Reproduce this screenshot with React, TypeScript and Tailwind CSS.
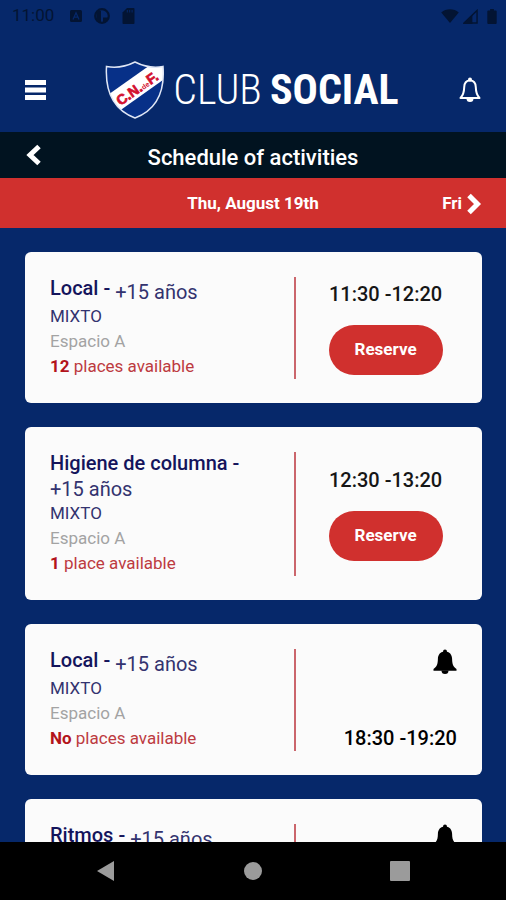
import { useState } from "react";

type Activity = {
  id: number;
  name: string;
  ages: string;
  group: string;
  room: string;
  places: number;
  time: string;
};

const activities: Activity[] = [
  { id: 1, name: "Local -", ages: "+15 años", group: "MIXTO", room: "Espacio A", places: 12, time: "11:30 -12:20" },
  { id: 2, name: "Higiene de columna -", ages: "+15 años", group: "MIXTO", room: "Espacio A", places: 1, time: "12:30 -13:20" },
  { id: 3, name: "Local -", ages: "+15 años", group: "MIXTO", room: "Espacio A", places: 0, time: "18:30 -19:20" },
  { id: 4, name: "Ritmos -", ages: "+15 años", group: "MIXTO", room: "Espacio A", places: 0, time: "19:30 -20:20" },
];

function StatusBar() {
  return (
    <div className="flex h-8 shrink-0 items-center justify-between pl-3 pr-2 text-[#031433]">
      <div className="flex items-center gap-4">
        <span className="text-[17px]">11:00</span>
        <svg className="h-3 w-3" viewBox="0 0 12 12" aria-hidden="true">
          <rect width="12" height="12" rx="1.5" fill="currentColor" />
          <path d="M3 9.5 6 2.8l3 6.7M4.2 7.2h3.6" fill="none" stroke="#06286a" strokeWidth="1.3" />
        </svg>
        <svg className="-ml-1 h-4 w-4" viewBox="0 0 16 16" aria-hidden="true">
          <circle cx="8" cy="8" r="6.8" fill="none" stroke="currentColor" strokeWidth="2.2" />
          <path d="M2.500 3H7v11.500L2.500 13z" fill="currentColor" />
          <path d="M9 9.500h5.500l-3.500 5H9z" fill="currentColor" />
        </svg>
        <svg className="-ml-1 h-4 w-[13px]" viewBox="0 0 12 16" aria-hidden="true">
          <path d="M4.500 0H11a1 1 0 0 1 1 1v14a1 1 0 0 1-1 1H1a1 1 0 0 1-1-1V4.500z" fill="currentColor" />
          <path d="M4.800 2v2.500M7.200 2v2.500M9.600 2v2.500" stroke="#06286a" strokeWidth="1" />
        </svg>
      </div>
      <div className="flex items-center gap-1">
        <svg className="h-[14px] w-[18px]" viewBox="0 0 20 16" aria-hidden="true">
          <path d="M10 16 0 4C5.500-.8 14.500-.8 20 4z" fill="currentColor" />
        </svg>
        <svg className="h-[15px] w-[15px]" viewBox="0 0 16 16" aria-hidden="true">
          <path d="M15 1.500V15H1z" fill="none" stroke="currentColor" strokeWidth="1.500" />
          <path d="M0 16 10 6v10z" fill="currentColor" />
        </svg>
        <svg className="ml-1 h-[15px] w-3" viewBox="0 0 12 16" aria-hidden="true">
          <path d="M4 0h4v1.500h2a1 1 0 0 1 1 1V15a1 1 0 0 1-1 1H2a1 1 0 0 1-1-1V2.500a1 1 0 0 1 1-1h2z" fill="currentColor" />
        </svg>
      </div>
    </div>
  );
}

function Shield() {
  return (
    <svg className="h-15 w-15" viewBox="0 0 60 60" role="img" aria-label="C.N. de F.">
      <defs>
        <clipPath id="shield">
          <path d="M1.500 6.500C12 8.500 21 6.500 30 2c9 4.500 18 6.500 28 4.500C60 32 51 50 30 58 9 50 0 32 1.500 6.500z" />
        </clipPath>
      </defs>
      <g clipPath="url(#shield)">
        <rect width="60" height="60" fill="#073088" />
        <path d="M0 37 48 3h14v14L15 50.500z" fill="#fff" />
      </g>
      <path
        d="M1.500 6.500C12 8.500 21 6.500 30 2c9 4.500 18 6.500 28 4.500C60 32 51 50 30 58 9 50 0 32 1.500 6.500z"
        fill="none"
        stroke="#dfe6f5"
        strokeWidth="1.500"
      />
      <g
        transform="translate(15.500 46) rotate(-35)"
        fill="#d3102f"
        stroke="#d3102f"
        strokeWidth="0.700"
        fontFamily="Liberation Sans, sans-serif"
        fontWeight="700"
      >
        <text x="0" y="0" fontSize="14">C.N.</text>
        <text x="28" y="0" fontSize="7" strokeWidth="0">de</text>
        <text x="36.500" y="0" fontSize="14">F.</text>
      </g>
    </svg>
  );
}

function Bell({ outline = false }: { outline?: boolean }) {
  return (
    <svg className="h-[26px] w-6" viewBox="0 0 24 26" aria-hidden="true">
      {outline ? (
        <path
          d="M12 3.500c4 0 5.700 3 5.800 6.800.1 4.700.9 7.900 3.700 10.700h-19c2.800-2.800 3.600-6 3.700-10.700.1-3.800 1.800-6.800 5.800-6.800z"
          fill="none"
          stroke="currentColor"
          strokeWidth="2"
          strokeLinejoin="round"
        />
      ) : (
        <path
          d="M12 2.500c4.600 0 7 3.200 7.100 7.300.1 4.800.7 7.700 4.400 10.300v1.700H.5v-1.700c3.700-2.600 4.300-5.500 4.400-10.300.1-4.100 2.500-7.300 7.100-7.300z"
          fill="currentColor"
        />
      )}
      <circle cx="12" cy="2.500" r="2" fill="currentColor" />
      <path d="M8.500 21.500h7a3.500 3.500 0 0 1-7 0z" fill="currentColor" />
    </svg>
  );
}

function Chevron({ right = false }: { right?: boolean }) {
  return (
    <svg className="h-[22px] w-4" viewBox="0 0 16 22" aria-hidden="true">
      <path
        d={right ? "M3 2.500 11.500 11 3 19.500" : "M14 2.500 5 11 14 19.500"}
        fill="none"
        stroke="currentColor"
        strokeWidth="5"
      />
    </svg>
  );
}

function Header() {
  return (
    <header className="flex h-[100px] shrink-0 items-end justify-between px-6 pb-3">
      <button aria-label="Menu" className="flex h-15 items-center">
        <svg className="h-5 w-[22px]" viewBox="0 0 22 20" aria-hidden="true">
          <path d="M1 2.500h21M1 10h21M1 17.500h21" stroke="currentColor" strokeWidth="5" />
        </svg>
      </button>
      <h1 className="flex items-center gap-2 whitespace-nowrap font-['Roboto_Condensed','Liberation_Sans_Narrow',sans-serif] text-[42px] leading-[60px]">
        <Shield />
        <span className="font-light">CLUB</span>
        <span className="font-bold">SOCIAL</span>
      </h1>
      <button aria-label="Notifications" className="flex h-15 items-center">
        <Bell outline />
      </button>
    </header>
  );
}

function ActivityCard({ activity }: { activity: Activity }) {
  const { name, ages, group, room, places, time } = activity;
  const full = places === 0;

  return (
    <li className="flex rounded-md bg-[#fbfbfb] px-[25px] pb-6 pt-[25px]">
      <div className="w-3/5 text-[17px] leading-[25px]">
        <div className="flex flex-wrap gap-x-[5px] pb-px text-xl leading-[22px] text-[#14145c]">
          <h2 className="font-medium">{name}</h2>
          <span className="pt-1 text-[#33336f]">{ages}</span>
        </div>
        <p className="text-[#33336f]">{group}</p>
        <p className="text-[#a3a3a3]">{room}</p>
        <p className="text-[#bd3a40]">
          <b className="text-[#b3141b]">{full ? "No" : places}</b> {places === 1 ? "place" : "places"} available
        </p>
      </div>
      {full ? (
        <div className="flex w-2/5 flex-col items-end justify-between border-l-2 border-[#cb666c] text-black">
          <button aria-label="Notify me">
            <Bell />
          </button>
          <time className="text-xl font-medium leading-[26px]">{time}</time>
        </div>
      ) : (
        <div className="flex w-2/5 flex-col items-center justify-center gap-[18px] border-l-2 border-[#cb666c] pl-[18px] text-[#161616]">
          <time className="text-xl font-medium leading-[26px]">{time}</time>
          <button className="h-[50px] w-[114px] rounded-full bg-[#d0302e] text-[17px] font-bold text-white">
            Reserve
          </button>
        </div>
      )}
    </li>
  );
}

export default function App() {
  const [day, setDay] = useState("Thu, August 19th");

  return (
    <div className="flex h-screen flex-col overflow-hidden bg-[#06286a] font-[Roboto,sans-serif] text-white">
      <StatusBar />
      <Header />
      <div className="grid h-[46px] shrink-0 grid-cols-[1fr_auto_1fr] items-center bg-[#011320] px-[25px]">
        <button aria-label="Back" className="justify-self-start">
          <Chevron />
        </button>
        <h2 className="pt-1 text-[22px] font-medium">Schedule of activities</h2>
      </div>
      <div className="grid h-[50px] shrink-0 grid-cols-[1fr_auto_1fr] items-center bg-[#d0302e] px-6 pt-0.5 text-[17px] font-bold">
        <span className="col-start-2">{day}</span>
        <button className="flex items-center gap-1 justify-self-end" onClick={() => setDay("Fri, August 20th")}>
          Fri <Chevron right />
        </button>
      </div>
      <main className="min-h-0 flex-1 overflow-y-auto pl-[25px] pr-6 pt-6 [scrollbar-width:none]">
        <ul className="flex flex-col gap-6 pb-6">
          {activities.map((activity) => (
            <ActivityCard key={activity.id} activity={activity} />
          ))}
        </ul>
      </main>
      <nav className="flex h-[58px] shrink-0 items-center justify-around bg-black px-8 text-[#9b9b9b]">
        <button aria-label="System back">
          <svg className="h-5 w-5" viewBox="0 0 20 20" aria-hidden="true">
            <path d="M18 0v20L1 10z" fill="currentColor" />
          </svg>
        </button>
        <button aria-label="Home">
          <svg className="h-5 w-5" viewBox="0 0 20 20" aria-hidden="true">
            <circle cx="10" cy="10" r="9" fill="currentColor" />
          </svg>
        </button>
        <button aria-label="Recent apps">
          <svg className="h-5 w-5" viewBox="0 0 20 20" aria-hidden="true">
            <rect width="20" height="20" rx="1" fill="currentColor" />
          </svg>
        </button>
      </nav>
    </div>
  );
}
